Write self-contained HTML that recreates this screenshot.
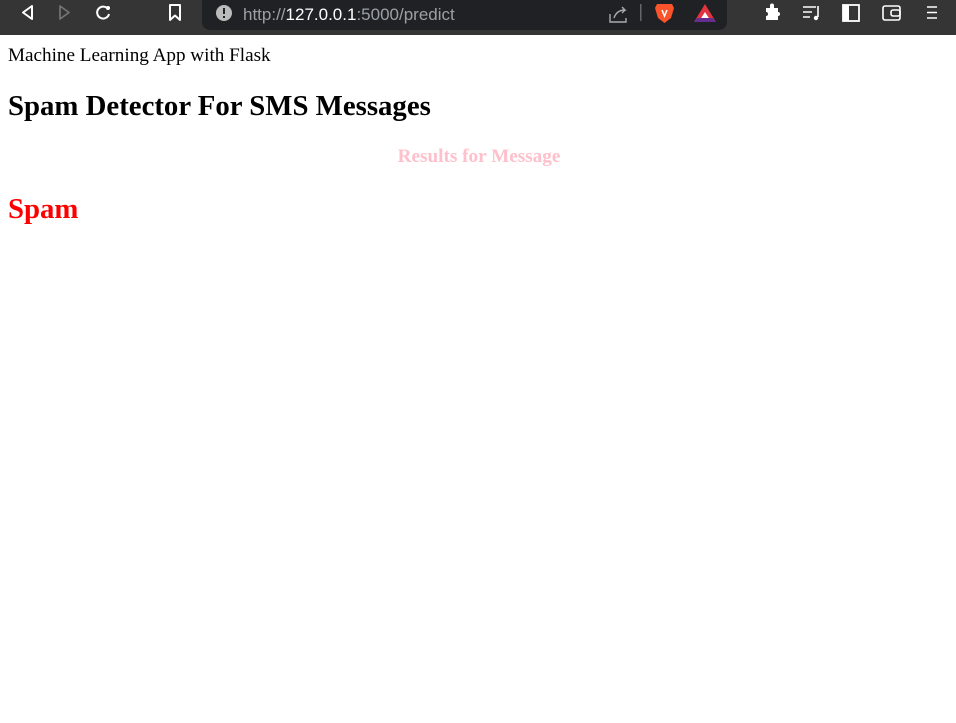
<!DOCTYPE html>
<html><head><style>
body{margin:0;width:956px;height:723px;overflow:hidden;background:#fff;font-family:"Liberation Serif",serif;position:relative}
.bar{position:absolute;left:0;top:0;width:956px;height:35px;background:#353535}
.url{position:absolute;left:202px;top:0;width:525px;height:30px;background:#202124;border-radius:0 0 8px 8px}
.t{position:absolute;white-space:nowrap;line-height:1}
</style></head><body>
<div class="bar">
<svg width="956" height="35" style="position:absolute;left:0;top:0">
<path d="M32 6 L23 12.5 L32 19 Z" fill="none" stroke="#fff" stroke-width="2" stroke-linejoin="round"/>
<path d="M60 6 L69 12.5 L60 19 Z" fill="none" stroke="#777" stroke-width="1.6" stroke-linejoin="round"/>
<path d="M108 9 A6 6 0 1 0 109 14" fill="none" stroke="#fff" stroke-width="2"/>
<circle cx="108" cy="8" r="2" fill="#fff"/>
<path d="M170 5 H180 V20 L175 15.5 L170 20 Z" fill="none" stroke="#fff" stroke-width="2" stroke-linejoin="round"/>
</svg>
<div class="url">
<svg width="525" height="30" style="position:absolute;left:0;top:0">
<circle cx="22" cy="13" r="8" fill="#bbb"/><rect x="21" y="8" width="2" height="6" fill="#202124"/><rect x="21" y="16" width="2" height="2" fill="#202124"/>
<path d="M408 14 V22 H424 V18 M412 18 C414 12 418 10 423 10 L420 7 M423 10 L420 13" fill="none" stroke="#aaa" stroke-width="1.4"/>
<rect x="438" y="4" width="1.5" height="17" fill="#666"/>
<path d="M455 4 H470 L472 8 L469 18 L462.5 23 L456 18 L453 8 Z" fill="#fb542b"/>
<path d="M460 10 L462.5 16 L465 10" fill="none" stroke="#fff" stroke-width="1.5"/>
<path d="M503 4 L514 22 H492 Z" fill="#e2343f"/><path d="M503 12 L507.5 19 H498.5 Z" fill="#fff"/><path d="M492 22 H514 L511 18 H495Z" fill="#662d91"/>
</svg>
<div class="t" style="left:41px;top:5px;font:17px 'Liberation Sans',sans-serif;color:#9aa0a6">http://<span style="color:#fff">127.0.0.1</span>:5000/predict</div>
</div>
<svg width="956" height="35" style="position:absolute;left:0;top:0;pointer-events:none">
<path d="M766 8 H770 V5.5 A2 2 0 0 1 774 5.5 V8 H778 V12 A2 2 0 0 1 778 16 V20 H766 V16 A2 2 0 0 0 766 12 Z" fill="#fff"/>
<path d="M803 7 H816 M803 12 H812 M803 17 H810" stroke="#fff" stroke-width="1.6"/>
<path d="M818 6 V17" stroke="#fff" stroke-width="1.6"/><circle cx="816" cy="18" r="2.2" fill="#fff"/>
<rect x="843" y="5" width="16" height="16" fill="none" stroke="#fff" stroke-width="1.8"/><rect x="843" y="5" width="6" height="16" fill="#fff"/>
<rect x="883" y="6" width="17" height="14" rx="2" fill="none" stroke="#fff" stroke-width="1.6"/><rect x="891" y="10" width="9" height="6" rx="2" fill="none" stroke="#fff" stroke-width="1.6"/>
<path d="M927 7 H937 M927 12.5 H937 M927 18 H937" stroke="#fff" stroke-width="1.6"/>
</svg>
</div>
<div class="t" style="left:8px;top:46px;font-size:19.15px">Machine Learning App with Flask</div>
<div class="t" style="left:8px;top:92px;font-size:28.8px;font-weight:bold">Spam Detector For SMS Messages</div>
<div class="t" style="left:0;width:958px;text-align:center;top:147px;font-size:19.2px;font-weight:bold;color:pink">Results for Message</div>
<div class="t" style="left:8px;top:195px;font-size:28.8px;font-weight:bold;color:red">Spam</div>
</body></html>
